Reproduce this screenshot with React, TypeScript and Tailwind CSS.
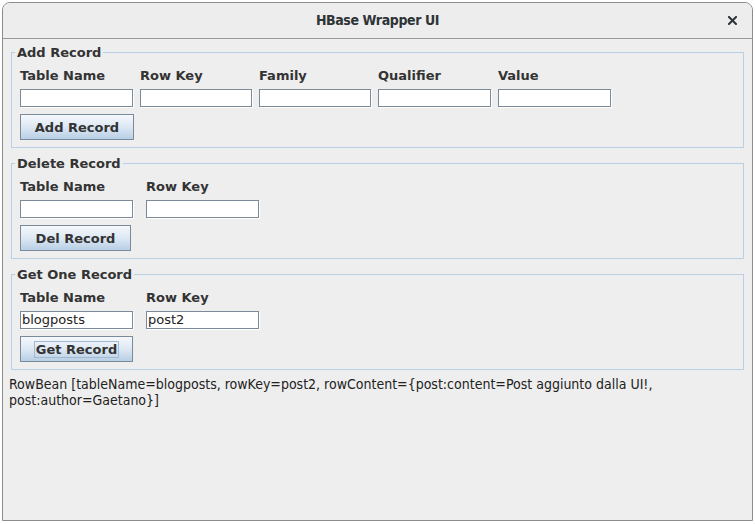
import React from "react";

const labelFont = { fontFamily: '"DejaVu Sans", "Liberation Sans", sans-serif' };
const condensed = { fontFamily: '"DejaVu Sans Condensed", "Liberation Sans Narrow", sans-serif' };

function Field({ value = "", w = "w-[113px]" }: { value?: string; w?: string }) {
  return (
    <div
      className={`${w} h-[18px] border border-[#7a8a99] bg-white pl-[1px] text-[13px] leading-[16px] text-[#222] shadow-[1px_1px_0_#ffffff]`}
      style={labelFont}
    >
      {value}
    </div>
  );
}

function Button({ label, w, focused = false }: { label: string; w: string; focused?: boolean }) {
  return (
    <div
      className={`${w} h-[26px] border border-[#7a8a99] bg-gradient-to-b from-[#f5f8fc] via-[#dde8f3] to-[#b8cfe5] flex items-center justify-center text-[13px] font-bold text-[#333333]`}
      style={labelFont}
    >
      <span className={focused ? "border border-[#a3b8cc] px-[1px] leading-[15px]" : "leading-[15px]"}>{label}</span>
    </div>
  );
}

function Group({
  title,
  cols,
  button,
  gap = "gap-[7px]",
  className = "",
}: {
  title: string;
  cols: { label: string; value?: string; w: string }[];
  button: React.ReactNode;
  gap?: string;
  className?: string;
}) {
  return (
    <fieldset className={`mx-[8px] border border-[#b8cfe5] pl-[8px] pb-[7px] ${className}`}>
      <legend className="ml-[-5px] px-[2px] text-[13px] font-bold leading-[15px] text-[#333333]" style={labelFont}>
        {title}
      </legend>
      <div className={`flex ${gap} mt-[8px]`}>
        {cols.map((c) => (
          <div key={c.label} className="flex flex-col">
            <div className="text-[13px] font-bold leading-[15px] text-[#333333]" style={labelFont}>
              {c.label}
            </div>
            <div className="mt-[6px]">
              <Field value={c.value} w={c.w} />
            </div>
          </div>
        ))}
      </div>
      <div className="mt-[7px]">{button}</div>
    </fieldset>
  );
}

export default function App() {
  return (
    <div className="w-[755px] h-[524px] bg-white overflow-hidden">
      <div className="ml-[2px] mt-[2px] w-[751px] h-[519px] border border-[#8c8c8c] rounded-t-[8px] overflow-hidden bg-[#eeeeee] flex flex-col">
        {/* title bar */}
        <div className="h-[36px] shrink-0 border-b border-[#9a9a9a] bg-[#ededed] relative flex items-center justify-center">
          <span className="text-[14px] font-bold tracking-[-0.4px] text-[#2e3436]" style={condensed}>
            HBase Wrapper UI
          </span>
          <svg className="absolute right-[15px] top-[13px]" width="9" height="9" viewBox="0 0 9 9">
            <path d="M1 1 L8 8 M8 1 L1 8" stroke="#2e3436" strokeWidth="2" strokeLinecap="square" />
          </svg>
        </div>

        <div className="pt-[6px] flex flex-col">
          <Group
            title="Add Record"
            cols={[
              { label: "Table Name", w: "w-[113px]" },
              { label: "Row Key", w: "w-[112px]" },
              { label: "Family", w: "w-[112px]" },
              { label: "Qualifier", w: "w-[113px]" },
              { label: "Value", w: "w-[113px]" },
            ]}
            button={<Button label="Add Record" w="w-[114px]" />}
          />
          <Group
            className="mt-[8px]"
            gap="gap-[13px]"
            title="Delete Record"
            cols={[
              { label: "Table Name", w: "w-[113px]" },
              { label: "Row Key", w: "w-[113px]" },
            ]}
            button={<Button label="Del Record" w="w-[111px]" />}
          />
          <Group
            className="mt-[8px]"
            gap="gap-[13px]"
            title="Get One Record"
            cols={[
              { label: "Table Name", value: "blogposts", w: "w-[113px]" },
              { label: "Row Key", value: "post2", w: "w-[113px]" },
            ]}
            button={<Button label="Get Record" w="w-[113px]" focused />}
          />
          <div className="mt-[6px] px-[6px] text-[14px] leading-[16px] text-[#222222]" style={condensed}>
            RowBean [tableName=blogposts, rowKey=post2, rowContent={"{"}post:content=Post aggiunto dalla UI!,
            <br />
            post:author=Gaetano{"}"}]
          </div>
        </div>
      </div>
    </div>
  );
}
